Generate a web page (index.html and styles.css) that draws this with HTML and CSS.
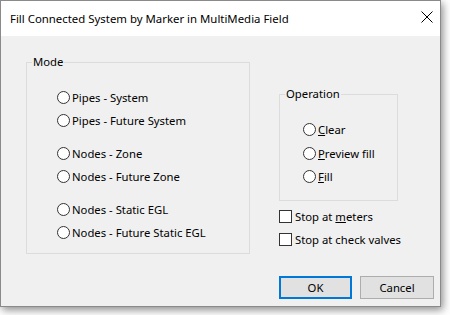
FILE: index.html
```html
<!DOCTYPE html>
<html>
<head>
<meta charset="utf-8">
<link rel="stylesheet" href="styles.css">
</head>
<body>
<div class="window">
  <div class="titlebar">
    <span class="title">Fill Connected System by Marker in MultiMedia Field</span>
    <svg class="close" width="12" height="12" viewBox="0 0 12 12"><path d="M0.5 0.5 L11.5 11.5 M11.5 0.5 L0.5 11.5" stroke="#000" stroke-width="1" fill="none"/></svg>
  </div>
  <div class="client">
    <fieldset class="group mode">
      <legend>Mode</legend>
      <div class="opts">
        <div class="pair">
          <label class="opt"><span class="radio"></span><span>Pipes - System</span></label>
          <label class="opt"><span class="radio"></span><span>Pipes - Future System</span></label>
        </div>
        <div class="pair">
          <label class="opt"><span class="radio"></span><span>Nodes - Zone</span></label>
          <label class="opt"><span class="radio"></span><span>Nodes - Future Zone</span></label>
        </div>
        <div class="pair">
          <label class="opt"><span class="radio"></span><span>Nodes - Static EGL</span></label>
          <label class="opt"><span class="radio"></span><span>Nodes - Future Static EGL</span></label>
        </div>
      </div>
    </fieldset>
    <div class="side">
      <fieldset class="group operation">
        <legend>Operation</legend>
        <div class="opts">
          <label class="opt"><span class="radio"></span><span><u>C</u>lear</span></label>
          <label class="opt"><span class="radio"></span><span><u>P</u>review fill</span></label>
          <label class="opt"><span class="radio"></span><span><u>F</u>ill</span></label>
        </div>
      </fieldset>
      <div class="checks">
        <label class="opt"><span class="check"></span><span>Stop at <u>m</u>eters</span></label>
        <label class="opt"><span class="check"></span><span>Stop at check valves</span></label>
      </div>
      <div class="buttons">
        <button class="btn default">OK</button>
        <button class="btn">Cancel</button>
      </div>
    </div>
  </div>
</div>
</body>
</html>
```

FILE: styles.css
```css
html, body {
  margin: 0;
  padding: 0;
  background: #ffffff;
}
body {
  width: 450px;
  height: 315px;
  overflow: hidden;
  font-family: "Noto Sans", "Liberation Sans", sans-serif;
  font-size: 11.3px;
  color: #000;
}
.window {
  width: 439px;
  height: 305px;
  border: 1px solid #8a8a8a;
  background: #f0f0f0;
  box-shadow: 2px 3px 8px rgba(0,0,0,0.45);
  display: flex;
  flex-direction: column;
}
.titlebar {
  height: 35px;
  background: #ffffff;
  display: flex;
  align-items: center;
  justify-content: space-between;
  padding: 0 7px 0 9px;
  flex: none;
}
.title {
  font-size: 11.4px;
  margin-top: -1px;
}
.close {
  display: block;
  margin-top: -3px;
}
.client {
  flex: 1;
  display: flex;
  padding: 18px 0 0 25px;
}
.group {
  margin: 0;
  padding: 0;
  border: 1px solid #dcdcdc;
  min-width: 0;
}
.group legend {
  padding: 0 1px;
  margin-left: 5px;
  line-height: 16px;
}
.mode {
  width: 224px;
  height: 200px;
  box-sizing: border-box;
  flex: none;
}
.opts {
  display: flex;
  flex-direction: column;
}
.mode .opts {
  padding: 16px 0 0 30px;
  gap: 10px;
}
.pair {
  display: flex;
  flex-direction: column;
}
.opt {
  display: flex;
  align-items: center;
  height: 23px;
  white-space: nowrap;
}
.radio {
  width: 11px;
  height: 11px;
  border: 1px solid #333;
  border-radius: 50%;
  background: #fff;
  margin-right: 2px;
  flex: none;
}
.side {
  margin-left: 29px;
  display: flex;
  flex-direction: column;
}
.operation {
  margin-top: 32px;
  width: 119px;
  height: 115px;
  box-sizing: border-box;
}
.operation .opts {
  padding: 16px 0 0 23px;
}
.operation .opt {
  height: 23.5px;
}
.checks {
  display: flex;
  flex-direction: column;
  margin-top: 4px;
}
.check {
  width: 11px;
  height: 11px;
  border: 1px solid #333;
  background: #fff;
  margin-right: 3px;
  flex: none;
}
.buttons {
  display: flex;
  gap: 8px;
  margin-top: 25px;
}
.btn {
  width: 74px;
  height: 23px;
  box-sizing: border-box;
  background: #e1e1e1;
  border: 1px solid #adadad;
  font-family: inherit;
  font-size: 11.3px;
  color: #000;
  padding: 0;
  margin: 0;
}
.btn.default {
  border: 2px solid #0078d7;
  width: 73px;
}
```
